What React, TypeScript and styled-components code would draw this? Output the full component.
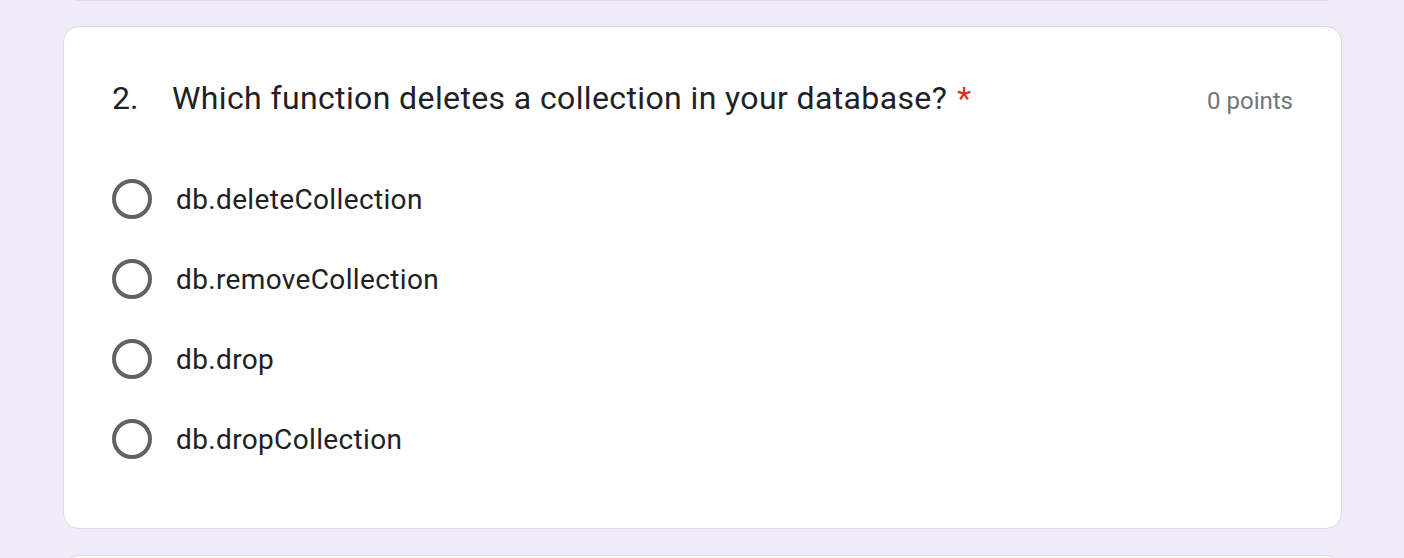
import React from "react";
import styled, { createGlobalStyle } from "styled-components";

const Global = createGlobalStyle`
  html, body { margin: 0; padding: 0; background: #f0ebf8; overflow: hidden; }
  body { font-family: Roboto, "Noto Sans", Arial, sans-serif; }
`;

const Page = styled.div`
  display: flex;
  flex-direction: column;
  align-items: flex-start;
  gap: 25px;
  padding-left: 63px;
  margin-top: -60px;
`;

const Card = styled.div`
  box-sizing: border-box;
  width: 1279px;
  background: #fff;
  border: 1px solid #dadce0;
  border-radius: 16px;
  padding: 47px 48px 49px 48px;
`;

const PeekCard = styled.div<{ $gapAbove?: number }>`
  box-sizing: border-box;
  width: 1279px;
  height: 61px;
  margin-top: ${(p) => p.$gapAbove ?? 0}px;
  background: #fff;
  border: 1px solid #dadce0;
  border-radius: 16px;
`;

const TitleRow = styled.div`
  display: flex;
  align-items: baseline;
  justify-content: space-between;
  height: 48px;
  line-height: 48px;
`;

const Title = styled.div`
  display: flex;
  font-size: 32px;
  color: #202124;
`;

const Num = styled.span`
  width: 60px;
`;

const Question = styled.span`
  letter-spacing: 0.38px;
`;

const Star = styled.span`
  color: #d93025;
  margin-left: 10px;
`;

const Points = styled.div`
  font-size: 24px;
  color: #70757a;
`;

const Options = styled.div`
  display: flex;
  flex-direction: column;
  margin-top: 37px;
`;

const Option = styled.label`
  display: flex;
  align-items: center;
  height: 80px;
  gap: 24px;
  font-size: 28px;
  letter-spacing: 0.36px;
  color: #202124;
`;

const Radio = styled.span`
  box-sizing: border-box;
  width: 40px;
  height: 40px;
  border-radius: 50%;
  border: 4px solid #5f6368;
  flex: none;
`;

const options = [
  "db.deleteCollection",
  "db.removeCollection",
  "db.drop",
  "db.dropCollection",
];

export default function App() {
  return (
    <>
      <Global />
      <Page>
        <PeekCard />
        <Card>
          <TitleRow>
            <Title>
              <Num>2.</Num>
              <Question>Which function deletes a collection in your database?</Question>
              <Star>*</Star>
            </Title>
            <Points>0 points</Points>
          </TitleRow>
          <Options>
            {options.map((o) => (
              <Option key={o}>
                <Radio />
                <span>{o}</span>
              </Option>
            ))}
          </Options>
        </Card>
        <PeekCard $gapAbove={1} />
      </Page>
    </>
  );
}
